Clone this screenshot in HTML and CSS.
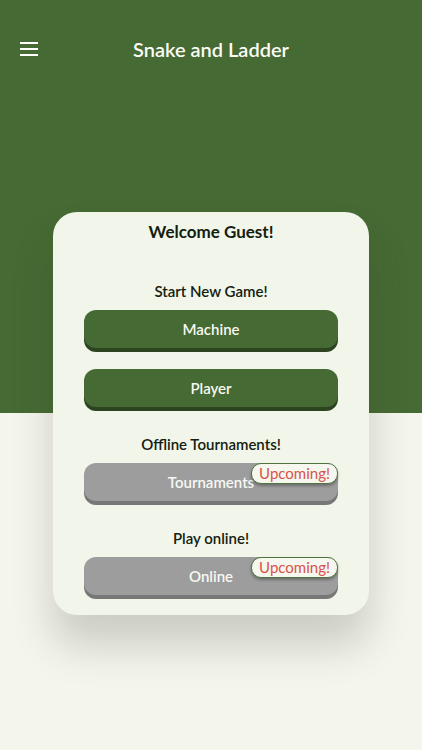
FILE: index.html
```html
<!DOCTYPE html>
<html lang="en">
<head>
    <meta charset="UTF-8">
    <meta name="viewport" content="width=device-width, initial-scale=1.0">
    <title>Snake and Ladder</title>
    <link rel="stylesheet" href="styles.css">
</head>
<body>
    <div class="header">
        <svg class="menu-icon" width="18" height="14" viewBox="0 0 18 14">
            <rect x="0" y="0" width="18" height="2" fill="#fff"/>
            <rect x="0" y="6" width="18" height="2" fill="#fff"/>
            <rect x="0" y="12" width="18" height="2" fill="#fff"/>
        </svg>
        <h1 class="title">Snake and Ladder</h1>
    </div>

    <div class="card">
        <h2 class="welcome">Welcome Guest!</h2>

        <div class="section">
            <p class="label">Start New Game!</p>
            <button class="btn">Machine</button>
            <button class="btn">Player</button>
        </div>

        <div class="section">
            <p class="label">Offline Tournaments!</p>
            <div class="btn-wrap">
                <button class="btn btn-disabled">Tournaments</button>
                <span class="badge">Upcoming!</span>
            </div>
        </div>

        <div class="section">
            <p class="label">Play online!</p>
            <div class="btn-wrap">
                <button class="btn btn-disabled">Online</button>
                <span class="badge">Upcoming!</span>
            </div>
        </div>
    </div>
</body>
</html>
```

FILE: styles.css
```css
body {
    margin: 0;
    font-family: Lato, "Open Sans", sans-serif;
    background: linear-gradient(to bottom, #466a33 0, #466a33 413px, #f4f5ec 413px);
    min-height: 750px;
}
.header {
    display: flex;
    align-items: center;
    height: 97px;
    padding: 0 20px;
    position: relative;
}
.menu-icon {
    display: block;
}
.title {
    position: absolute;
    left: 0;
    right: 0;
    margin: 0;
    text-align: center;
    color: #fbfcf6;
    font-size: 20px;
    font-weight: 600;
    pointer-events: none;
}
.card {
    margin: 115px 53px 0;
    background: #f1f5ea;
    border-radius: 24px;
    padding: 9px 31px 16px;
    box-shadow: 0 30px 40px rgba(60, 65, 50, 0.22);
}
.welcome {
    margin: 0;
    text-align: center;
    font-size: 17px;
    font-weight: 700;
    color: #14200f;
    line-height: 22px;
}
.section {
    display: flex;
    flex-direction: column;
    gap: 17px;
    margin-top: 38px;
}
.section + .section {
    margin-top: 23px;
}
.label {
    margin: 0 0 -8px;
    text-align: center;
    font-size: 15px;
    font-weight: 600;
    color: #14200f;
    line-height: 20px;
}
.btn {
    display: block;
    width: 100%;
    height: 38px;
    border: none;
    border-radius: 12px;
    background: #466a33;
    box-shadow: 0 4px 0 #2c4420;
    color: #f7f8f2;
    font-family: Lato, "Open Sans", sans-serif;
    font-size: 15px;
    font-weight: 600;
    margin-bottom: 4px;
}
.btn-disabled {
    background: #9d9d9d;
    box-shadow: 0 4px 0 #777;
}
.btn-wrap {
    position: relative;
}
.badge {
    position: absolute;
    top: 0;
    right: 0;
    padding: 0 7px;
    height: 19px;
    line-height: 18px;
    background: #f6f7ef;
    border: 1px solid #4e7340;
    border-radius: 10px;
    color: #d9534a;
    font-size: 15px;
    box-shadow: 0 2px 3px rgba(0, 0, 0, 0.3);
}
```
